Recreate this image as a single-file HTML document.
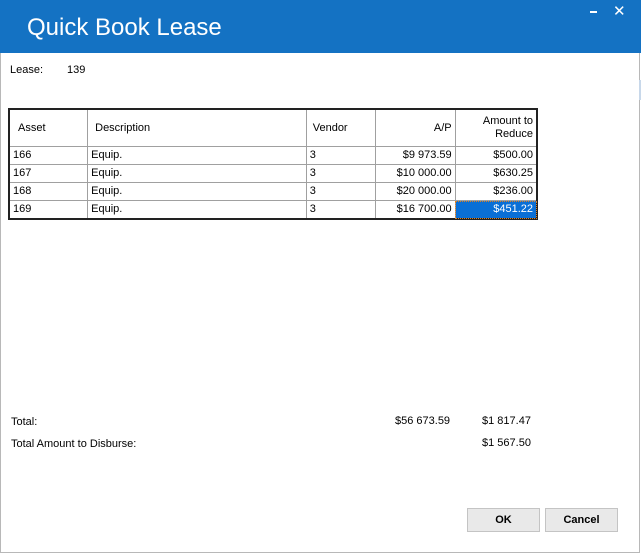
<!DOCTYPE html>
<html><head><style>
body{margin:0;width:641px;height:554px;background:#fff;position:relative;overflow:hidden;font-family:"Liberation Sans",Arial,sans-serif;font-size:11px;color:#000}
.a{position:absolute;white-space:nowrap}
.bar{position:absolute;left:0;top:0;width:641px;height:53px;background:#1472c3}
.frame{position:absolute;left:0;top:53px;width:638px;height:499px;border:1px solid #b8b8b8;border-top:none}
table{position:absolute;left:8px;top:108px;border-collapse:collapse;border:2px solid #222;width:530px}
td{border:1px solid #a0a0a0;height:17px;padding:0 3px;line-height:17px}
.h td{height:36px;line-height:13px;border-top:none}
.r{text-align:right}
.sel{background:#0a6fd6;color:#fff;outline:1px dotted #e08020;outline-offset:-1px}
.btn{position:absolute;top:508px;width:71px;height:22px;background:#e9e9e9;border:1px solid #c4c4c4;font-weight:bold;text-align:center;line-height:22px}
</style></head><body>
<div class="bar"></div>
<div class="a" style="left:27px;top:14px;font-size:24px;color:#fff;font-weight:300">Quick Book Lease</div>
<div class="a" style="left:590px;top:11px;width:7px;height:2px;background:#fff"></div>
<div class="a" style="left:613px;top:2px;color:#fff;font-size:15px">✕</div>
<div class="frame"></div>
<div class="a" style="left:639px;top:80px;width:2px;height:20px;background:#c8d8ea"></div>
<div class="a" style="left:10px;top:64px">Lease:</div>
<div class="a" style="left:67px;top:64px">139</div>
<table>
<tr class="h"><td style="width:68px;padding-left:8px">Asset</td><td style="width:215px;padding-left:7px">Description</td><td style="width:60px;padding-left:6px">Vendor</td><td class="r" style="width:75px">A/P</td><td class="r" style="width:76px">Amount to<br>Reduce</td></tr>
<tr><td>166</td><td>Equip.</td><td>3</td><td class="r">$9 973.59</td><td class="r">$500.00</td></tr>
<tr><td>167</td><td>Equip.</td><td>3</td><td class="r">$10 000.00</td><td class="r">$630.25</td></tr>
<tr><td>168</td><td>Equip.</td><td>3</td><td class="r">$20 000.00</td><td class="r">$236.00</td></tr>
<tr><td>169</td><td>Equip.</td><td>3</td><td class="r">$16 700.00</td><td class="r sel">$451.22</td></tr>
</table>
<div class="a" style="left:11px;top:416px">Total:</div>
<div class="a" style="left:395px;top:415px">$56 673.59</div>
<div class="a" style="left:482px;top:415px">$1 817.47</div>
<div class="a" style="left:11px;top:438px">Total Amount to Disburse:</div>
<div class="a" style="left:482px;top:437px">$1 567.50</div>
<div class="btn" style="left:467px">OK</div>
<div class="btn" style="left:545px">Cancel</div>
</body></html>
